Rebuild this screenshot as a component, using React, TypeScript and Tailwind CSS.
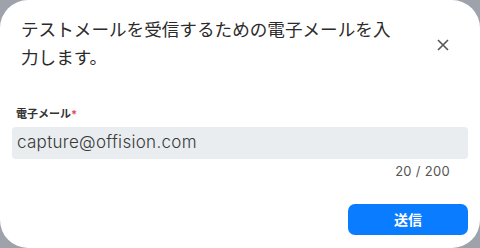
export default function App() {
  return (
    <div
      className="h-[248px] w-[480px] bg-[#9ea2ab] overflow-hidden"
      style={{ fontFamily: 'Inter, "Noto Sans CJK JP", sans-serif' }}
    >
      <div className="flex h-full w-full flex-col rounded-[28px] bg-white">
        <div className="flex items-start justify-between pl-[21px] pr-[30px] pt-[16px]">
          <h2 className="w-[380px] text-[17.6px] leading-[28px] text-[#2b2b2b]">
            テストメールを受信するための電子メールを入力します。
          </h2>
          <button className="mt-[22px] text-[#555]" aria-label="close">
            <svg width="14" height="14" viewBox="0 0 14 14" fill="none" stroke="currentColor" strokeWidth="1.6">
              <path d="M2 2L12 12M12 2L2 12" />
            </svg>
          </button>
        </div>
        <div className="mt-[34px] px-[12px]">
          <label className="block pl-[4px] text-[11px] font-bold leading-[16px] text-[#333]">
            電子メール<span className="text-[#e5484d]">*</span>
          </label>
          <div className="mt-[5px] flex h-[32px] items-center rounded-[4px] bg-[#e9edf0] px-[5px] text-[17px] font-light tracking-[0.3px] text-[#3a3a3a]">
            capture@offision.com
          </div>
          <div className="mt-[4px] pr-[18px] text-right text-[13px] leading-[16px] tracking-[0.3px] text-[#555]">20 / 200</div>
        </div>
        <div className="mt-auto flex justify-end px-[12px] pb-[13px]">
          <button className="h-[31px] w-[120px] rounded-[7px] bg-[#0a7cff] text-[14px] font-semibold text-white">
            送信
          </button>
        </div>
      </div>
    </div>
  );
}
